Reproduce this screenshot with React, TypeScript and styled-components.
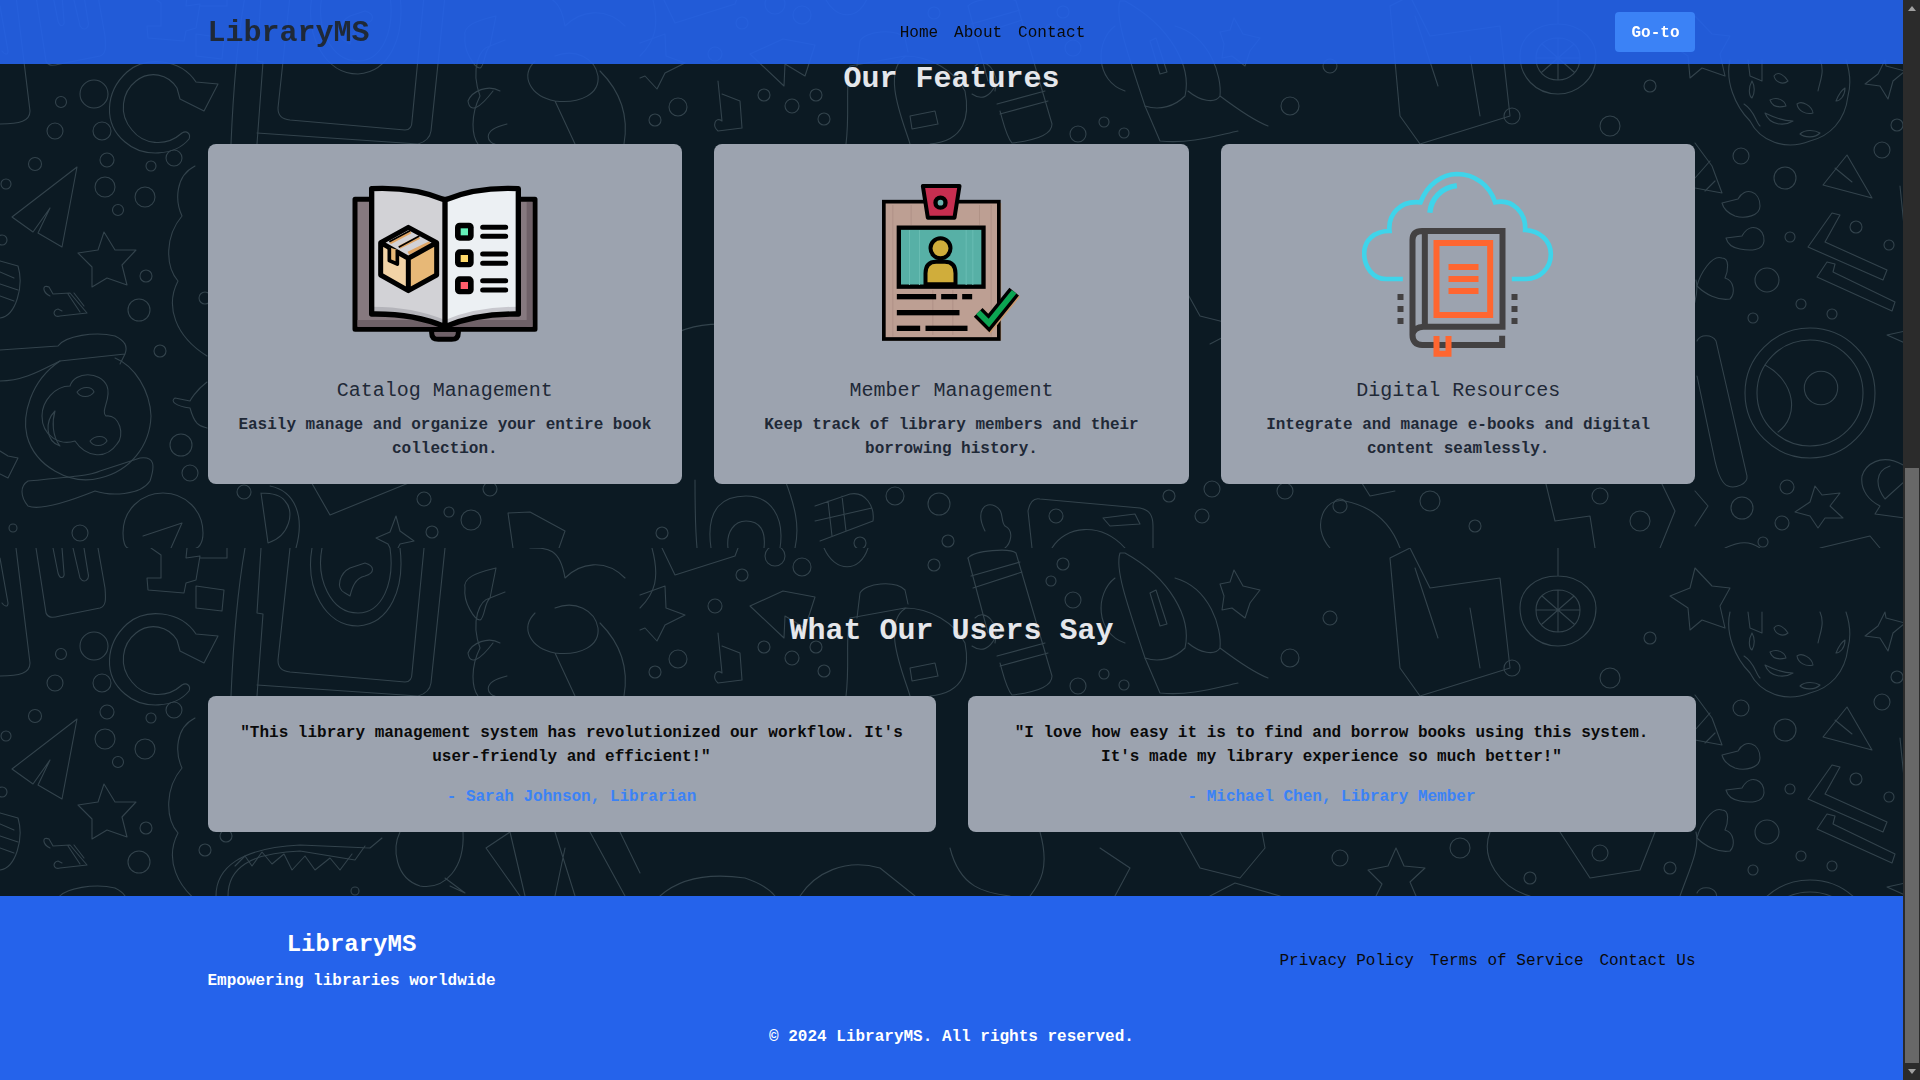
import React, {useLayoutEffect, useRef} from 'react';
import styled, {createGlobalStyle} from 'styled-components';

const GlobalStyle = createGlobalStyle`
  html, body {
    margin: 0;
    height: 100%;
    overflow: hidden;
    background: #0c1a23;
  }
  * {
    box-sizing: border-box;
  }
`

const Page = styled.div`
  display: flex;
  height: 100vh;
`

const Scroller = styled.div`
  flex: 1;
  min-width: 0;
  overflow-y: scroll;
  scrollbar-width: none;
  font-family: "Liberation Mono", "DejaVu Sans Mono", monospace;
  font-size: 16px;
  line-height: 24px;
`

// the browser hides its own scrollbar when photographed, so the bar is drawn
const ScrollBar = styled.div`
  width: 17px;
  display: flex;
  flex-direction: column;
  background: #2b2b2b;
`

const ScrollArrow = styled.div<{$down?: boolean}>`
  height: 17px;
  display: flex;
  align-items: center;
  justify-content: center;

  &::before {
    content: "";
    border-left: 4px solid transparent;
    border-right: 4px solid transparent;
    ${p => p.$down ? 'border-top: 5px solid #a0a0a0;' : 'border-bottom: 5px solid #a0a0a0;'}
  }
`

const ScrollTrack = styled.div`
  flex: 1;
  display: flex;
  flex-direction: column;
  justify-content: flex-end;
  padding: 0 1px 0 2px;
`

const ScrollThumb = styled.div`
  height: 595px;
  background: #686868;
`

const Header = styled.header`
  position: sticky;
  top: 0;
  z-index: 10;
  height: 64px;
  background: rgba(37, 99, 235, 0.9);
`

const Container = styled.div`
  width: 1488px;
  margin: 0 auto;
`

const HeaderRow = styled(Container)`
  height: 100%;
  display: flex;
  align-items: center;
  justify-content: space-between;
`

const Logo = styled.div`
  padding-top: 2px;
  font-size: 30px;
  line-height: 36px;
  font-weight: 700;
  color: #1f2937;
`

const NavLinks = styled.nav`
  display: flex;
  gap: 16px;
  padding-top: 2px;
`

const FooterLinks = styled(NavLinks)`
  padding-top: 0;
`

const PlainLink = styled.a`
  color: #0a0a0a;
  text-decoration: none;
  white-space: nowrap;
`

const GoButton = styled.button`
  width: 80px;
  height: 40px;
  padding: 2px 0 0;
  border: none;
  border-radius: 4px;
  background: #3b82f6;
  color: #fff;
  font: 700 16px/24px "Liberation Mono", "DejaVu Sans Mono", monospace;
`

const Hero = styled.section`
  height: 750px;
`

const Section = styled.section<{$height: number}>`
  position: relative;
  height: ${p => p.$height}px;
  padding: 65px 0 64px;
  overflow: hidden;
  background: #0c1a23;
`

const BackdropSvg = styled.svg`
  position: absolute;
  top: 0;
  left: 0;
  width: 1903px;
  height: 552px;
`

const SectionBody = styled(Container)`
  position: relative;
`

const Heading = styled.h2`
  margin: 0 0 47px;
  font-size: 30px;
  line-height: 36px;
  font-weight: 700;
  text-align: center;
  color: #e5e7eb;
`

const FeatureGrid = styled.div`
  display: grid;
  grid-template-columns: repeat(3, 1fr);
  gap: 32px;
`

const Card = styled.div`
  background: #9ca3af;
  border-radius: 8px;
  padding: 24px;
  text-align: center;
`

const QuoteCard = styled(Card)`
  padding: 25px 24px 23px;
`

const IconBox = styled.div`
  height: 192px;
  margin-bottom: 17px;
  display: flex;
  justify-content: center;
`

const CardTitle = styled.h3`
  margin: 0 0 8px;
  font-size: 20px;
  line-height: 28px;
  font-weight: 400;
  color: #1f2937;
`

const CardText = styled.p`
  margin: 0 0 -1px;
  font-weight: 700;
  color: #1f2937;
`

const QuoteGrid = styled.div`
  display: grid;
  grid-template-columns: repeat(2, 1fr);
  gap: 32px;
`

const Quote = styled.p`
  margin: 0 0 16px;
  font-weight: 700;
  color: #0a0a0a;
`

const Author = styled.p`
  margin: 0;
  font-weight: 700;
  color: #3b82f6;
`

const Footer = styled.footer`
  height: 184px;
  padding: 33px 0 31px;
  background: #2563eb;
`

const FooterRow = styled(Container)`
  display: flex;
  align-items: center;
  justify-content: space-between;
`

const FooterBrand = styled.div`
  text-align: center;
  color: #fff;
  font-weight: 700;
`

const FooterLogo = styled.div`
  font-size: 24px;
  line-height: 32px;
  margin-bottom: 8px;
`

const FooterCopy = styled.div`
  margin-top: 32px;
  text-align: center;
  color: #fff;
  font-weight: 700;
`

const rings: number[][] = [
    // left column
    [94, 98, 14], [61, 106, 5.5], [55, 135, 8], [102, 135, 9], [35, 168, 6.5], [107, 164, 7], [105, 191, 10], [118, 214, 5.5],
    [151, 170, 5], [174, 162, 8], [145, 201, 10], [6, 188, 5], [2, 244, 5], [146, 280, 6], [139, 314, 11], [160, 355, 6],
    [181, 449, 11], [190, 477, 8], [13, 532, 4], [80, 537, 8], [205, 302, 6], [226, 288, 6], [355, 343, 4],
    // under the first cards
    [244, 496, 7], [424, 503, 7], [471, 524, 10], [432, 536, 6], [449, 516, 5], [490, 493, 7],
    [775, 8, 10], [802, 19, 9], [742, 27, 6], [934, 17, 6], [715, 58, 7], [764, 99, 6], [678, 111, 9], [655, 124, 6],
    [792, 110, 7], [824, 123, 6], [816, 99, 6], [1063, 16, 6], [1051, 33, 5], [1073, 52, 8], [1104, 126, 5], [1078, 138, 8], [1124, 137, 5],
    [895, 500, 9], [939, 508, 11], [662, 537, 6], [860, 547, 6], [948, 545, 6], [1056, 520, 7], [1169, 500, 6], [1212, 493, 8], [1202, 520, 7],
    [1285, 495, 8], [1340, 510, 7], [1430, 505, 10], [1475, 530, 6], [1600, 500, 8], [1640, 525, 10], [1330, 70, 7], [1290, 110, 9],
    [1512, 120, 8], [1610, 130, 10], [1650, 90, 6], [1340, 310, 8], [1460, 300, 10], [1530, 330, 6], [1600, 305, 8], [1670, 320, 6],
    // right column
    [1741, 160, 8], [1785, 182, 11], [1882, 154, 8], [1897, 129, 6], [1856, 231, 6], [1790, 241, 5], [1889, 249, 5], [1767, 284, 12],
    [1801, 308, 5], [1832, 318, 5], [1753, 322, 5], [1787, 491, 7], [1742, 512, 11], [1782, 527, 7], [1763, 546, 5],
    [1810, 397, 65], [1810, 397, 53], [1821, 392, 16.7],
]

const lines: string[] = [
    // refresh arrow
    'M196,86 C180,62 145,60 127,76 C105,96 103,128 125,146 C143,162 175,160 189,143 C191,138 187,134 182,137 C165,152 143,148 132,134 C118,118 122,96 136,85 C150,74 168,78 177,92 L180,103 L204,115 L218,88 L196,86',
    // plane, star, note
    'M77,171 L12,221 L33,236 L50,212 L38,237 L62,251 Z',
    'M104,236 L115,254 L136,254 L122,269 L127,289 L107,282 L92,291 L92,271 L78,257 L98,254 Z',
    'M50,300 C42,296 42,288 49,291 L53,298 L70,297 L87,317 L60,320 C53,322 52,314 58,313 L62,315 M68,298 L80,316 M74,297 L84,310',
    'M0,265 L18,270 C24,290 16,320 0,322 M0,276 L14,282 M0,288 L18,294 M0,300 L14,305',
    // monkey
    'M0,354 L58,350 C65,340 95,335 115,340 C125,345 128,350 125,358 L120,368 M0,385 C25,385 45,372 60,365 L125,358',
    'M60,365 C30,385 22,420 27,440 C35,470 70,490 100,482 C130,475 150,450 151,420 C150,395 135,370 115,362',
    'M70,390 C75,375 100,375 107,390 C112,402 100,415 106,420 C120,418 125,440 117,448 C105,465 85,460 75,445 C60,450 42,440 42,420 C42,405 55,390 70,390 Z',
    'M77,396 C82,390 92,390 94,396 C90,402 80,402 77,396 Z M90,445 C95,439 105,439 107,445 C103,451 93,451 90,445 Z',
    'M55,415 C45,425 45,445 60,450 C52,440 52,425 55,415 Z',
    'M28,485 C60,482 90,480 100,475 L140,462 C155,460 155,470 150,485 C140,500 110,500 95,495 C70,505 40,515 28,510 C20,500 20,490 28,485 Z',
    'M123,537 C123,515 140,497 163,497 C186,497 203,515 203,537 C203,548 198,552 196,552 M123,537 C123,545 125,552 128,552 M143,540 L182,527 L171,552',
    'M0,455 L8,460 L18,462 L8,482 L0,478',
    'M195,170 C175,180 175,205 182,220 C165,240 165,270 178,285 C165,310 175,340 207,360',
    'M207,386 C195,395 190,405 190,405 L175,402 C170,405 175,410 190,412 C195,430 200,430 207,432',
    // top strip, left to right
    'M16,0 L30,115 C30,125 20,128 0,128 M0,10 L8,55 C8,60 4,58 2,55',
    'M36,0 L46,65 C48,70 52,70 60,68 L100,60 C106,58 106,52 105,40 L98,0 M53,0 L58,25 C60,32 65,30 64,25 L62,0 M73,0 L80,30 C84,36 90,32 88,25 L84,0',
    'M151,0 L161,7 L161,30 L147,30 L148,42 L184,45 L186,35 L196,32 L200,8 L186,10 L187,0 M200,10 L227,10 L227,0 M196,38 L224,42 L222,63 L196,60 Z',
    'M245,0 C238,40 233,100 231,148 M261,0 L257,65 L263,66 L257,148',
    'M290,0 L278,112 C278,120 282,123 290,124 L405,134 C410,134 412,130 412,125 L424,0',
    'M445,0 L431,135 C430,142 425,146 418,148 L257,137',
    'M312,0 C305,40 325,78 358,78 C390,76 405,40 400,0 M322,0 C316,30 330,65 358,65 C382,65 395,35 390,0',
    'M345,45 C335,40 340,25 350,20 L365,15 C375,18 375,25 365,28 C355,30 352,40 350,48 Z',
    'M496,20 C475,25 463,30 465,40 C463,55 475,72 480,72 C485,70 484,55 490,50 L505,44 M496,20 L490,50 C480,52 470,72 480,100 C470,120 472,140 478,148',
    'M500,95 C488,88 472,95 468,105 C470,118 480,112 493,95 M507,128 C478,135 490,148 495,148',
    'M535,65 C520,80 530,100 555,105 L575,148 M555,60 C575,52 595,62 598,80 C600,98 580,108 555,105 M600,75 C625,100 628,125 624,148',
    'M530,0 C548,0 560,0 565,30 C580,15 605,10 625,30 M652,0 C660,30 655,45 640,60',
    // middle strip
    'M662,0 L675,27 L735,8 L738,0 M824,0 C835,25 860,25 868,0',
    'M640,47 L665,38 L666,60 L685,67 L665,77 L657,93 L645,80 L640,82',
    'M750,58 L783,43 L815,49 L805,80 L785,68 L784,90 Z',
    'M718,85 L722,125 C715,120 712,130 718,135 L742,132 L740,105 L722,98',
    'M846,148 C850,115 845,90 850,70 L905,60 C930,60 955,75 965,95 C970,120 965,145 930,148 M906,60 C880,75 905,130 910,148',
    'M857,70 L860,45 C865,35 895,32 905,42 L908,56 M910,120 L935,115 L938,128 L912,133 Z',
    'M968,10 C975,2 1010,0 1016,5 L1052,128 C1052,140 1030,145 1012,147 C1006,140 1003,125 1000,115 M973,40 L1022,24 M971,28 L1020,14 M1000,118 L1048,105 M997,108 L1045,95',
    'M968,10 L988,85 M975,70 C985,60 1000,75 995,95 M972,98 C982,105 990,100 995,90',
    'M1120,5 C1115,20 1125,50 1145,110 C1160,115 1175,110 1185,100 C1192,70 1170,30 1125,5 Z M1150,45 L1160,78 L1167,76 L1156,42 Z',
    'M1175,30 C1210,40 1222,80 1220,100 C1215,108 1200,105 1188,95 M1115,30 C1095,45 1095,85 1125,95 M1145,110 L1160,145 C1190,148 1215,140 1238,135 M1220,100 C1240,115 1255,125 1268,130',
    'M1234,22 L1243,38 L1260,42 L1250,55 L1245,70 L1232,60 L1222,62 L1224,48 L1220,36 L1230,34 Z',
    'M1390,10 L1410,0 L1430,40 L1500,30 L1510,120 L1420,148 L1400,120 Z M1415,20 L1438,90 M1470,60 L1480,120',
    'M1558,0 L1558,28 M1558,28 C1585,28 1596,48 1596,60 C1596,85 1575,98 1558,98 C1535,98 1520,80 1520,60 C1520,42 1535,28 1558,28 Z M1558,42 C1570,42 1580,50 1580,62 C1580,75 1570,84 1558,84 C1545,84 1536,75 1536,62 C1536,50 1545,42 1558,42 Z M1558,42 L1558,84 M1536,62 L1580,62 M1542,48 L1574,76 M1574,48 L1542,76',
    'M1695,20 L1712,38 L1730,40 L1720,58 L1725,80 L1702,72 L1690,82 L1688,60 L1670,48 L1690,40 Z',
    // knob and tablet under the cards
    'M695,484 C695,510 695,530 697,552 M785,484 C795,510 800,530 795,552',
    'M711,552 C705,510 725,500 746,500 C770,500 785,520 780,552 M728,552 C726,535 735,525 746,525 C760,525 766,535 764,552',
    'M815,510 L850,498 C865,495 875,510 873,525 L820,545 M828,505 L832,540 M842,500 L846,535 M815,525 L872,512',
    'M985,535 C975,515 985,505 995,510 C1005,515 1000,525 1005,530 C1015,535 1010,548 1005,552',
    'M1032,552 L1028,515 C1030,505 1035,502 1040,503 L1140,512 C1150,514 1153,520 1153,530 L1153,552 M1052,552 C1065,530 1100,525 1125,552',
    'M1103,522 L1135,518 L1140,528 L1110,530 Z',
    'M261,497 L268,547 C290,540 295,515 285,505 C280,498 270,497 261,497 M270,490 C295,495 305,520 296,552',
    'M310,484 L330,519 L416,484 M508,517 L530,516 L565,535 L559,552 M513,552 L508,517',
    'M396,520 L400,535 L414,545 L400,548 L394,560 L388,548 L376,542 L390,536 Z',
    'M1330,552 C1310,530 1325,500 1345,505 C1370,510 1390,525 1400,552 M1360,484 L1370,500 L1395,495',
    'M1545,484 L1555,525 L1590,520 L1595,552 M1660,484 L1675,515 L1660,552',
    // bottom strip
    'M216,348 C216,320 240,300 300,297 L370,300 L382,290 M228,348 C228,320 250,305 300,303 L355,312 L365,298',
    'M235,318 L245,308 L252,318 L262,304 L272,316 L284,306 L292,322 L305,308 L315,322 L330,310 L340,322 L352,306',
    'M400,284 C392,300 395,330 420,338 C445,342 465,320 463,284 M445,330 L465,345 L450,338',
    'M486,300 L510,284 M486,300 L520,348 M510,284 L525,348 M555,284 L575,348 M590,284 L625,348 M565,300 L555,348 M620,284 L640,325',
    'M660,348 C680,330 710,325 745,330 C760,335 770,342 775,348 M800,348 C815,325 845,310 880,320 L915,348',
    'M950,300 C960,340 985,345 1010,348 M1040,284 C1050,320 1040,335 1030,348 M1100,300 L1130,320 L1115,348',
    'M1180,284 L1200,320 L1240,330 L1265,300 L1262,284 M1210,348 L1235,335 L1280,348',
    'M1396,300 L1404,318 L1425,320 L1410,334 L1416,348 M1396,300 L1388,318 L1368,322 L1382,336 L1376,348',
    'M1490,284 C1480,310 1500,340 1530,348 M1560,284 L1590,330 L1640,322 L1655,284 M1680,348 C1690,320 1700,300 1696,284',
    // right column
    'M1730,64 C1725,85 1735,110 1750,125 C1760,145 1785,155 1810,145 C1830,140 1845,125 1848,100 C1852,85 1848,70 1846,64',
    'M1748,64 L1750,80 L1762,85 L1762,64 M1744,108 C1755,115 1755,125 1760,130 M1820,64 C1825,75 1820,85 1818,95',
    'M1774,80 C1778,74 1785,80 1788,85 C1782,90 1775,85 1774,80 Z M1770,104 C1778,100 1785,105 1786,110 C1778,112 1772,110 1770,104 Z M1797,108 C1802,104 1812,110 1813,117 C1806,119 1798,115 1797,108 Z M1800,138 C1805,133 1815,134 1820,137 C1815,142 1805,142 1800,138 Z M1836,105 C1840,95 1845,92 1845,92 C1845,100 1840,105 1836,105 Z',
    'M1765,117 C1770,130 1785,130 1793,125 C1785,125 1775,122 1765,117 Z M1752,85 C1748,92 1749,100 1752,102 C1755,97 1755,90 1752,85 Z',
    'M1885,64 L1886,70 L1905,75 L1893,85 L1888,103 L1880,90 L1865,88 L1878,78 Z',
    'M1823,189 L1847,159 L1872,202 Z M1835,172 L1852,186',
    'M1722,207 L1738,203 C1745,190 1760,195 1760,210 C1760,220 1745,223 1735,220 C1730,218 1724,215 1722,207 Z',
    'M1726,242 L1742,240 C1750,225 1765,232 1764,245 C1763,255 1750,255 1740,253 C1734,252 1728,250 1726,242 Z',
    'M1808,251 L1832,217 L1840,219 L1825,246 L1887,274 L1883,284 Z',
    'M1817,281 L1827,266 L1835,268 L1833,276 L1895,306 L1892,315 Z',
    'M1697,290 C1700,278 1712,258 1722,262 C1730,262 1728,275 1725,282 C1735,285 1735,298 1730,303 C1718,305 1705,298 1697,290 Z',
    'M1765,369 C1795,385 1800,420 1778,436',
    'M1697,345 C1700,338 1712,338 1716,345 L1747,480 C1748,488 1735,493 1728,490 C1722,488 1718,478 1715,465 L1697,380',
    'M1905,470 C1880,455 1865,470 1862,480 C1860,495 1870,505 1880,510 L1875,518 L1905,522 M1890,470 C1875,475 1875,490 1885,503 L1905,485',
    'M1815,490 L1822,499 L1840,497 L1830,510 L1843,522 L1825,522 L1818,532 L1810,520 L1795,516 L1810,506 Z',
    'M1695,147 L1712,170 L1722,197 L1695,192 M1695,182 L1710,165 M1705,195 L1715,185 M1695,495 L1708,510 L1695,530',
    'M1905,335 L1887,339 L1905,347 M1900,190 L1905,240 M1725,552 C1740,545 1750,545 1760,552 M1820,552 L1870,540 L1880,552',
]

// Same doodle wallpaper starts again at the top of each section
function Backdrop() {
    return (
        <BackdropSvg viewBox="0 0 1903 552" fill="none" stroke="#33434c" strokeWidth="1.1" strokeLinejoin="round" strokeLinecap="round" aria-hidden="true">
            {rings.map(([x, y, r], i) => <circle key={i} cx={x} cy={y} r={r}/>)}
            {lines.map((d, i) => <path key={i} d={d}/>)}
        </BackdropSvg>
    )
}

// The three icons are written in the coordinates of the reference crops, 3 units per pixel
function CatalogIcon() {
    return (
        <svg width="192" height="192" viewBox="27 -6 576 576">
            <path d="M275 478 v10 q0 20 20 20 h40 q20 0 20 -20 v-10 Z" fill="#6f6168" stroke="#000" strokeWidth="15" strokeLinejoin="round"/>
            <rect x="45" y="88" width="540" height="390" fill="#86797f" stroke="#000" strokeWidth="15" strokeLinejoin="round"/>
            <rect x="560" y="96" width="17" height="375" fill="#6f6168"/>
            <path d="M53 450 H577 V470 H53 Z" fill="#6f6168"/>
            <path d="M95 56 Q220 50 315 90 V470 Q220 430 95 432 Z" fill="#d2d2d6"/>
            <path d="M95 410 Q220 410 315 450 V470 Q220 430 95 432 Z" fill="#b4b4ba"/>
            <path d="M315 90 Q410 50 535 56 V432 Q410 430 315 470 Z" fill="#ecf0f3"/>
            <path d="M535 410 Q410 410 315 450 V470 Q410 430 535 432 Z" fill="#c8c8ce"/>
            <path d="M95 56 Q220 50 315 90 Q410 50 535 56 V432 Q410 430 315 470 Q220 430 95 432 Z M315 90 V470" fill="none" stroke="#000" strokeWidth="16" strokeLinejoin="round"/>
            <path d="M122 218 L205 265 V362 L122 315 Z" fill="#f2d3a6"/>
            <path d="M290 218 L205 265 V362 L290 315 Z" fill="#e7b877"/>
            <path d="M122 218 L205 172 L290 218 L205 265 Z" fill="#d2d2d6"/>
            <path d="M150 218 L212 185 M178 232 L238 202 M205 250 L270 218" stroke="#dfa564" strokeWidth="10"/>
            <path d="M205 172 L290 218 V315 L205 362 L122 315 V218 Z M122 218 L205 265 L290 218 M205 265 V362" fill="none" stroke="#000" strokeWidth="15" strokeLinejoin="round"/>
            <path d="M148 232 V272 L172 282 V240" fill="#e7b877" stroke="#000" strokeWidth="11" strokeLinejoin="round"/>
            <path d="M148 215 L210 182 M176 232 L238 198" stroke="#000" strokeWidth="5"/>
            <rect x="345" y="158" width="56" height="54" rx="14" fill="#000"/>
            <rect x="362" y="175" width="22" height="21" fill="#63f0b8"/>
            <rect x="345" y="238" width="56" height="54" rx="14" fill="#000"/>
            <rect x="362" y="255" width="22" height="21" fill="#ffd96b"/>
            <rect x="345" y="319" width="56" height="54" rx="14" fill="#000"/>
            <rect x="362" y="336" width="22" height="21" fill="#ff5d6c"/>
            <path d="M428 172 H497 M428 199 H497 M428 252 H497 M428 280 H497 M428 332 H497 M428 360 H497" stroke="#000" strokeWidth="15" strokeLinecap="round"/>
        </svg>
    )
}

function MemberIcon() {
    return (
        <svg width="192" height="192" viewBox="-43.5 -21 576 576">
            <rect x="47" y="84" width="348" height="412" fill="#c9996f"/>
            <rect x="43" y="80" width="345" height="412" fill="#bd9f93" stroke="#000" strokeWidth="11"/>
            <path d="M70 90 V485 M125 90 V150 M190 345 V480 M250 345 V480 M330 90 V150 M365 90 V485" stroke="#a98b80" strokeWidth="2"/>
            <path d="M160 33 H270 L255 128 H175 Z" fill="#c72e50" stroke="#000" strokeWidth="12" strokeLinejoin="round"/>
            <circle cx="213" cy="83" r="15" fill="#6bb3ae" stroke="#000" strokeWidth="13"/>
            <rect x="88" y="158" width="254" height="177" fill="#57b0a6" stroke="#000" strokeWidth="13"/>
            <path d="M120 165 V330 M150 165 V330 M290 165 V330 M310 165 V330" stroke="#69bdb3" strokeWidth="3"/>
            <path d="M168 328 V295 Q168 260 200 260 H226 Q258 260 258 295 V328 Z" fill="#d0ad3b" stroke="#000" strokeWidth="12"/>
            <circle cx="213" cy="220" r="30" fill="#d0ad3b" stroke="#000" strokeWidth="12"/>
            <rect x="82" y="357" width="118" height="16" fill="#000"/>
            <rect x="215" y="357" width="48" height="16" fill="#000"/>
            <rect x="278" y="357" width="30" height="16" fill="#000"/>
            <rect x="82" y="405" width="188" height="16" fill="#000"/>
            <rect x="82" y="452" width="70" height="16" fill="#000"/>
            <rect x="168" y="452" width="126" height="16" fill="#000"/>
            <path d="M326 412 L358 444 L434 350" fill="none" stroke="#c9996f" strokeWidth="38" transform="translate(3 3)"/>
            <path d="M326 412 L358 444 L434 350" fill="none" stroke="#000" strokeWidth="37"/>
            <path d="M326 412 L358 444 L434 350" fill="none" stroke="#0ca552" strokeWidth="17"/>
        </svg>
    )
}

function DigitalIcon() {
    return (
        <svg width="192" height="192" viewBox="37.5 9 576 576" fill="none">
            <path d="M160 342 H110 C70 342 44 305 44 265 C44 225 75 198 120 198 C115 150 150 105 213 112 C235 55 280 28 322 27 C375 27 420 60 437 112 C490 100 530 145 527 195 C570 198 604 225 604 268 C604 310 570 342 530 342 H487" stroke="#3fd4ea" strokeWidth="14"/>
            <path d="M241 143 C245 100 275 68 322 62" stroke="#3fd4ea" strokeWidth="16"/>
            <path d="M458 512 V540 H218 C198 540 189 528 189 510 V225 C189 208 198 198 218 198 H459 V485 H222 C205 485 189 495 189 510 M226 198 V485" stroke="#434142" strokeWidth="18"/>
            <rect x="261" y="234" width="161" height="216" stroke="#ff6630" strokeWidth="18"/>
            <path d="M297 306 H387 M297 342 H387 M297 378 H387" stroke="#ff6630" strokeWidth="18"/>
            <path d="M261 513 V566 H297 V513" stroke="#ff6630" strokeWidth="18"/>
            <path d="M144 396 h18 M144 432 h18 M144 468 h18 M486 396 h18 M486 432 h18 M486 468 h18" stroke="#434142" strokeWidth="18"/>
        </svg>
    )
}

const features = [
    {icon: <CatalogIcon/>, title: 'Catalog Management', text: 'Easily manage and organize your entire book collection.'},
    {icon: <MemberIcon/>, title: 'Member Management', text: 'Keep track of library members and their borrowing history.'},
    {icon: <DigitalIcon/>, title: 'Digital Resources', text: 'Integrate and manage e-books and digital content seamlessly.'},
]

const quotes = [
    {text: '"This library management system has revolutionized our workflow. It\'s user-friendly and efficient!"', author: '- Sarah Johnson, Librarian'},
    {text: '"I love how easy it is to find and borrow books using this system. It\'s made my library experience so much better!"', author: '- Michael Chen, Library Member'},
]

function App() {
    const scroller = useRef<HTMLDivElement>(null)

    // the page is photographed scrolled all the way down
    useLayoutEffect(() => {
        if (scroller.current) scroller.current.scrollTop = scroller.current.scrollHeight
    }, [])

    return (
        <Page>
            <GlobalStyle/>
            <Scroller ref={scroller}>
                <Header>
                    <HeaderRow>
                        <Logo>LibraryMS</Logo>
                        <NavLinks>
                            <PlainLink href="#">Home</PlainLink>
                            <PlainLink href="#">About</PlainLink>
                            <PlainLink href="#">Contact</PlainLink>
                        </NavLinks>
                        <GoButton>Go-to</GoButton>
                    </HeaderRow>
                </Header>
                <Hero/>
                <Section $height={552}>
                    <Backdrop/>
                    <SectionBody>
                        <Heading>Our Features</Heading>
                        <FeatureGrid>
                            {features.map(f => (
                                <Card key={f.title}>
                                    <IconBox>{f.icon}</IconBox>
                                    <CardTitle>{f.title}</CardTitle>
                                    <CardText>{f.text}</CardText>
                                </Card>
                            ))}
                        </FeatureGrid>
                    </SectionBody>
                </Section>
                <Section $height={348}>
                    <Backdrop/>
                    <SectionBody>
                        <Heading>What Our Users Say</Heading>
                        <QuoteGrid>
                            {quotes.map(q => (
                                <QuoteCard key={q.author}>
                                    <Quote>{q.text}</Quote>
                                    <Author>{q.author}</Author>
                                </QuoteCard>
                            ))}
                        </QuoteGrid>
                    </SectionBody>
                </Section>
                <Footer>
                    <FooterRow>
                        <FooterBrand>
                            <FooterLogo>LibraryMS</FooterLogo>
                            <div>Empowering libraries worldwide</div>
                        </FooterBrand>
                        <FooterLinks>
                            <PlainLink href="#">Privacy Policy</PlainLink>
                            <PlainLink href="#">Terms of Service</PlainLink>
                            <PlainLink href="#">Contact Us</PlainLink>
                        </FooterLinks>
                    </FooterRow>
                    <FooterCopy>© 2024 LibraryMS. All rights reserved.</FooterCopy>
                </Footer>
            </Scroller>
            <ScrollBar>
                <ScrollArrow/>
                <ScrollTrack>
                    <ScrollThumb/>
                </ScrollTrack>
                <ScrollArrow $down/>
            </ScrollBar>
        </Page>
    );
}


export default App;
